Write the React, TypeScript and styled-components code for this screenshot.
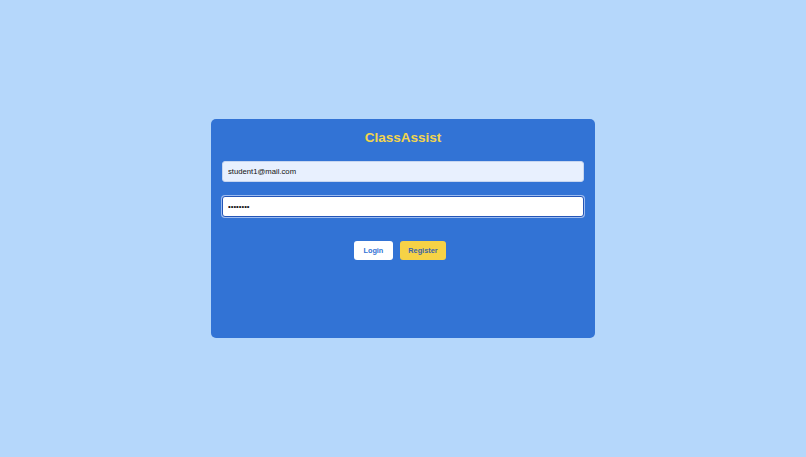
import styled, { createGlobalStyle } from "styled-components";

const GlobalStyle = createGlobalStyle`
  * {
    box-sizing: border-box;
  }
  body {
    margin: 0;
    background: #b5d7fb;
    font-family: "Liberation Sans", Arial, sans-serif;
  }
`;

const App = () => {
  return (
    <>
      <GlobalStyle />
      <Page>
        <Card>
          <Title>ClassAssist</Title>
          <Form>
            <Field type="email" defaultValue="student1@mail.com" $filled />
            <Field type="password" defaultValue="12345678" $focused />
            <Actions>
              <Button type="button">Login</Button>
              <Button type="button" $primary>
                Register
              </Button>
            </Actions>
          </Form>
        </Card>
      </Page>
    </>
  );
};

const Page = styled.div`
  width: 100vw;
  height: 100vh;
  display: flex;
  align-items: center;
  justify-content: center;
`;

const Card = styled.div`
  width: 384px;
  height: 219px;
  background: #3273d5;
  border-radius: 5px;
  padding: 10px 11px;
  display: flex;
  flex-direction: column;
`;

const Title = styled.h1`
  margin: 0 0 15px;
  color: #f2d54d;
  text-align: center;
  font-size: 13.5px;
  font-weight: 700;
  line-height: 17px;
`;

const Form = styled.div`
  display: flex;
  flex-direction: column;
  gap: 14px;
`;

const Field = styled.input<{ $filled?: boolean; $focused?: boolean }>`
  width: 100%;
  height: 21px;
  padding: 0 5px;
  border-radius: 3px;
  border: 1px solid ${({ $focused }) => ($focused ? "#2456b8" : "#c7d6f0")};
  background: ${({ $filled }) => ($filled ? "#e8f0fe" : "#fff")};
  box-shadow: ${({ $focused }) => ($focused ? "0 0 0 1px #9ebcf0" : "none")};
  color: #111;
  font-family: "Liberation Sans", Arial, sans-serif;
  font-size: 7.7px;
  outline: none;
`;

const Actions = styled.div`
  display: flex;
  justify-content: center;
  gap: 7px;
  margin-top: 10px;
  padding-right: 6px;
`;

const Button = styled.button<{ $primary?: boolean }>`
  height: 19px;
  padding: 0 ${({ $primary }) => ($primary ? "8.5px" : "9.5px")};
  border: none;
  border-radius: 3px;
  background: ${({ $primary }) => ($primary ? "#f6d246" : "#fff")};
  color: ${({ $primary }) => ($primary ? "#3b64a8" : "#3273d5")};
  font-family: "Liberation Sans", Arial, sans-serif;
  font-size: 7.3px;
  font-weight: 700;
  cursor: pointer;
`;

export default App;
